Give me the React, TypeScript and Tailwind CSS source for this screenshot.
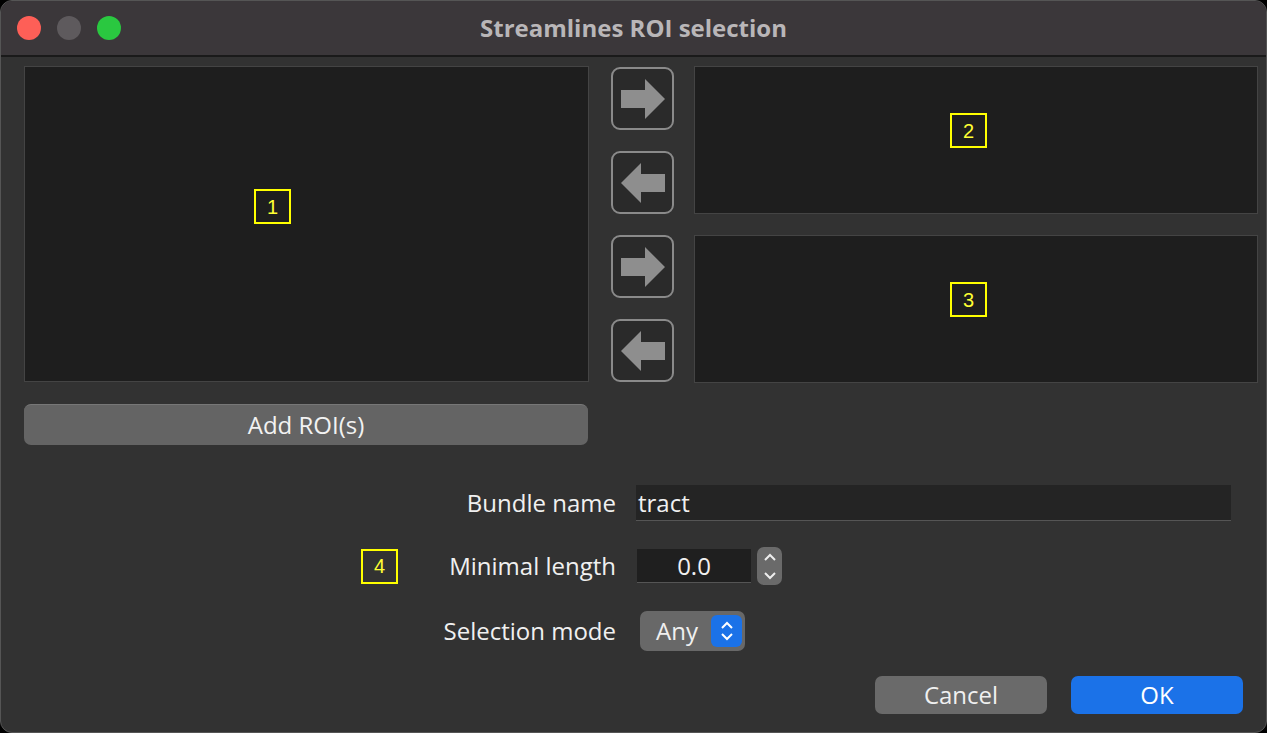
import React from "react";

const Arrow = ({ dir }: { dir: "r" | "l" }) => (
  <div className="w-[63px] h-[63px] rounded-[9px] border-2 border-[#8a8a8a] bg-[#2a2a2a] flex items-center justify-center">
    <svg width="48" height="42" viewBox="0 0 48 42">
      {dir === "r" ? (
        <polygon points="2,12 26,12 26,1 46,21 26,41 26,30 2,30" fill="#8e8e8e" />
      ) : (
        <polygon points="46,12 22,12 22,1 2,21 22,41 22,30 46,30" fill="#8e8e8e" />
      )}
    </svg>
  </div>
);

const Tag = ({ n }: { n: string }) => (
  <div className="w-[37px] h-[35px] border-2 border-[#ffff00] flex items-center justify-center text-[#ffff33] text-[20px]" style={{ fontFamily: "'Liberation Sans', sans-serif" }}>{n}</div>
);

export default function App() {
  return (
    <div className="w-[1267px] h-[733px] bg-black" style={{ fontFamily: "'Open Sans', Inter, sans-serif" }}>
      <div className="w-full h-full rounded-[12px] overflow-hidden bg-[#323232] border border-[#555] flex flex-col">
        <div className="h-[56px] bg-[#3b373a] border-b-2 border-[#1a1a1a] flex items-center relative shrink-0">
          <div className="flex gap-[16px] pl-[16px]">
            <div className="w-[24px] h-[24px] rounded-full bg-[#fe5f57]" />
            <div className="w-[24px] h-[24px] rounded-full bg-[#5e5a5d]" />
            <div className="w-[24px] h-[24px] rounded-full bg-[#2ac840]" />
          </div>
          <div className="absolute inset-0 flex items-center justify-center text-[#b9b6b8] text-[24px] font-bold">Streamlines ROI selection</div>
        </div>
        <div className="flex pl-[23px] pt-[9px] gap-[22px]">
          <div className="flex flex-col">
            <div className="w-[565px] h-[316px] bg-[#1e1e1e] border border-[#444] pl-[229px] pt-[122px]">
              <Tag n="1" />
            </div>
            <div className="mt-[22px] w-[564px] h-[41px] rounded-[7px] bg-[#646464] border-t border-[#777] flex items-center justify-center text-[#f2f2f2] text-[24px]">Add ROI(s)</div>
          </div>
          <div className="flex flex-col gap-[21px] pt-[1px]">
            <Arrow dir="r" />
            <Arrow dir="l" />
            <Arrow dir="r" />
            <Arrow dir="l" />
          </div>
          <div className="flex flex-col gap-[21px] -ml-[2px]">
            <div className="w-[564px] h-[148px] bg-[#1e1e1e] border border-[#444] pl-[255px] pt-[46px]"><Tag n="2" /></div>
            <div className="w-[564px] h-[148px] bg-[#1e1e1e] border border-[#444] pl-[255px] pt-[46px]"><Tag n="3" /></div>
          </div>
        </div>
        <div className="flex flex-col mt-[40px] text-[24px] text-[#f0f0f0]">
          <div className="flex items-center h-[36px]">
            <div className="w-[615px] text-right">Bundle name</div>
            <div className="ml-[20px] w-[595px] h-[36px] bg-[#242424] border-b border-[#555] flex items-center pl-[2px]">tract</div>
          </div>
          <div className="flex items-center h-[36px] mt-[27px]">
            <div className="w-[397px] flex justify-end"><Tag n="4" /></div>
            <div className="w-[218px] text-right">Minimal length</div>
            <div className="ml-[21px] w-[114px] h-[34px] bg-[#1f1f1f] border-b border-[#555] flex items-center justify-center">0.0</div>
            <div className="ml-[6px] w-[25px] h-[38px] rounded-[7px] bg-[#6a6a6a] flex flex-col items-center justify-around">
              <svg width="14" height="10" viewBox="0 0 14 10"><polyline points="2,8 7,3 12,8" fill="none" stroke="#eee" strokeWidth="2" /></svg>
              <svg width="14" height="10" viewBox="0 0 14 10"><polyline points="2,2 7,7 12,2" fill="none" stroke="#eee" strokeWidth="2" /></svg>
            </div>
          </div>
          <div className="flex items-center h-[40px] mt-[27px]">
            <div className="w-[615px] text-right">Selection mode</div>
            <div className="ml-[24px] w-[105px] h-[40px] rounded-[7px] bg-[#686868] flex items-center justify-between pl-[16px] pr-[3px]">
              <span>Any</span>
              <div className="w-[31px] h-[32px] rounded-[6px] bg-[#1b72e8] flex items-center justify-center">
                <svg width="14" height="22" viewBox="0 0 14 22"><polyline points="2,8 7,3 12,8" fill="none" stroke="#fff" strokeWidth="2" /><polyline points="2,14 7,19 12,14" fill="none" stroke="#fff" strokeWidth="2" /></svg>
              </div>
            </div>
          </div>
          <div className="flex justify-end gap-[24px] pr-[23px] mt-[25px]">
            <div className="w-[172px] h-[38px] rounded-[7px] bg-[#6a6a6a] flex items-center justify-center">Cancel</div>
            <div className="w-[172px] h-[38px] rounded-[7px] bg-[#1b72e8] flex items-center justify-center text-white">OK</div>
          </div>
        </div>
      </div>
    </div>
  );
}
